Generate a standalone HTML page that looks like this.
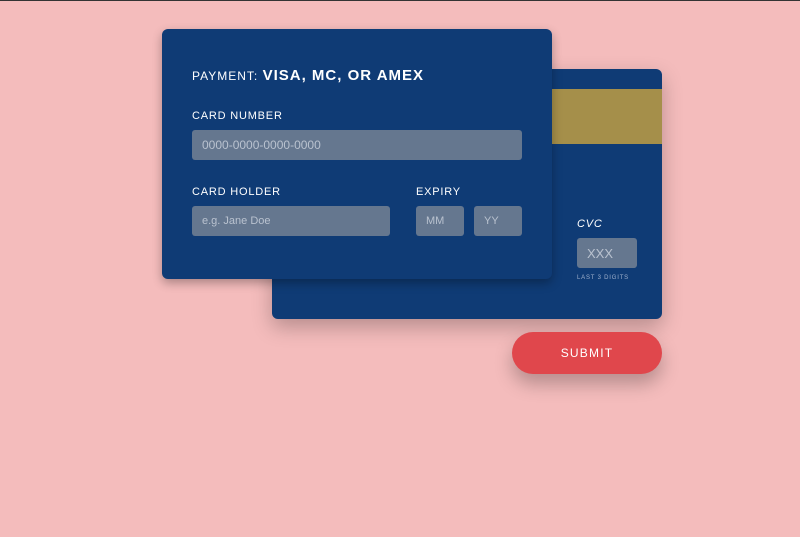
<!DOCTYPE html>
<html><head><meta charset="utf-8"><style>
*{box-sizing:border-box;margin:0;padding:0}
html,body{width:800px;height:537px;overflow:hidden;background:#f4bcbc;font-family:"Liberation Sans",sans-serif;position:relative}
.topline{position:absolute;left:0;top:0;width:800px;height:1px;background:#333}
.card{position:absolute;background:#0f3b75;border-radius:6px;box-shadow:0 8px 20px rgba(0,0,0,.25)}
.back{left:272px;top:69px;width:390px;height:250px}
.stripe{position:absolute;left:0;top:20px;width:390px;height:55px;background:#a58f4a}
.front{left:162px;top:29px;width:390px;height:250px;box-shadow:0 4px 10px rgba(0,0,0,.3)}
.lbl{position:absolute;color:#fff;font-size:11px;letter-spacing:.8px}
.inp{position:absolute;background:#65778f;border-radius:3px;color:#b9c2cf;font-size:12px;padding-left:10px;display:flex;align-items:center}
.title{position:absolute;left:30px;top:38px;color:#fff;font-size:12px;letter-spacing:1px}
.title b{font-size:15px}
.btn{position:absolute;left:512px;top:332px;width:150px;height:42px;border-radius:21px;background:#e0474c;color:#fff;font-size:12px;letter-spacing:1.2px;display:flex;align-items:center;justify-content:center;box-shadow:0 10px 18px rgba(0,0,0,.25)}
</style></head><body>
<div class="topline"></div>
<div class="card back"><div class="stripe"></div>
<div class="lbl" style="left:305px;top:149px;font-style:italic">CVC</div>
<div class="inp" style="left:305px;top:169px;width:60px;height:30px;font-size:13px">XXX</div>
<div class="lbl" style="left:305px;top:206px;font-size:6px;color:#9fb0cc">LAST 3 DIGITS</div>
</div>
<div class="card front">
<div class="title">PAYMENT: <b>VISA, MC, OR AMEX</b></div>
<div class="lbl" style="left:30px;top:81px">CARD NUMBER</div>
<div class="inp" style="left:30px;top:101px;width:330px;height:30px">0000-0000-0000-0000</div>
<div class="lbl" style="left:30px;top:157px">CARD HOLDER</div>
<div class="inp" style="left:30px;top:177px;width:198px;height:30px;font-size:11px">e.g. Jane Doe</div>
<div class="lbl" style="left:254px;top:157px">EXPIRY</div>
<div class="inp" style="left:254px;top:177px;width:48px;height:30px;font-size:11px">MM</div>
<div class="inp" style="left:312px;top:177px;width:48px;height:30px;font-size:11px">YY</div>
</div>
<div class="btn">SUBMIT</div>
</body></html>
